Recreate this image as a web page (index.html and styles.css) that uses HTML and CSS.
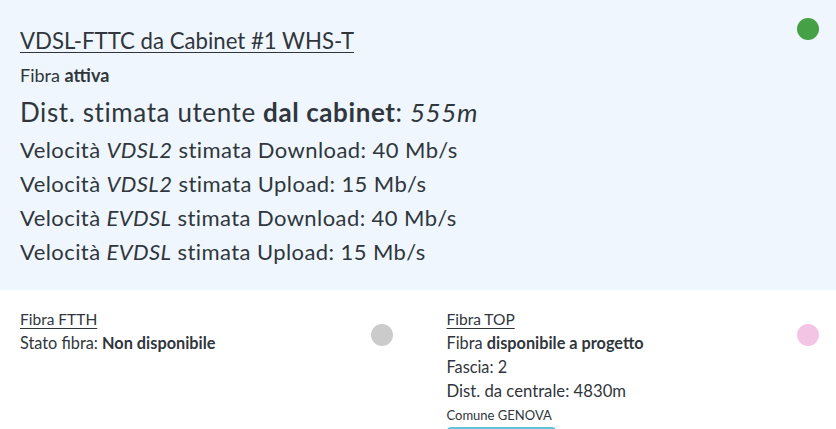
FILE: index.html
```html
<!DOCTYPE html>
<html lang="it">
<head>
<meta charset="utf-8">
<link rel="stylesheet" href="styles.css">
</head>
<body>
<section class="cabinet">
  <div class="cab-text">
    <div class="title"><u>VDSL-FTTC da Cabinet #1 WHS-T</u></div>
    <div class="line-m">Fibra <b>attiva</b></div>
    <div class="line-l">Dist. stimata utente <b>dal cabinet</b>: <i>555m</i></div>
    <div class="line-s">Velocità <i>VDSL2</i> stimata Download: 40 Mb/s</div>
    <div class="line-s">Velocità <i>VDSL2</i> stimata Upload: 15 Mb/s</div>
    <div class="line-s">Velocità <i>EVDSL</i> stimata Download: 40 Mb/s</div>
    <div class="line-s">Velocità <i>EVDSL</i> stimata Upload: 15 Mb/s</div>
  </div>
  <span class="dot dot-green"></span>
</section>
<section class="lower">
  <div class="col">
    <div class="col-text">
      <div class="sub-title"><u>Fibra FTTH</u></div>
      <div class="row">Stato fibra: <b>Non disponibile</b></div>
    </div>
    <span class="dot dot-grey"></span>
  </div>
  <div class="col">
    <div class="col-text">
      <div class="sub-title"><u>Fibra TOP</u></div>
      <div class="row">Fibra <b>disponibile a progetto</b></div>
      <div class="row">Fascia: 2</div>
      <div class="row wide">Dist. da centrale: 4830m</div>
      <div class="small">Comune GENOVA</div>
      <div class="btn"></div>
    </div>
    <span class="dot dot-pink"></span>
  </div>
</section>
</body>
</html>
```
FILE: styles.css
```css
html, body {
  margin: 0;
  padding: 0;
  background: #ffffff;
}
body {
  font-family: Lato, "Open Sans", sans-serif;
  color: #30363c;
  width: 836px;
  height: 429px;
  overflow: hidden;
}
b { font-weight: 700; }
u { text-decoration-thickness: 1px; text-underline-offset: 3px; }
.cabinet {
  background: #eff6fd;
  height: 290px;
  box-sizing: border-box;
  padding: 22px 17px 0 20px;
  display: flex;
  justify-content: space-between;
  align-items: flex-start;
}
.title { font-size: 22.2px; line-height: 37px; }
.line-m { font-size: 18px; line-height: 33px; }
.line-l { font-size: 26px; line-height: 41px; letter-spacing: 0.6px; }
.line-s { font-size: 22px; line-height: 34px; letter-spacing: 0.42px; }
.dot {
  display: block;
  width: 22px;
  height: 22px;
  border-radius: 50%;
  flex: none;
}
.dot-green { background: #46a046; margin-top: -4px; }
.dot-grey { background: #cbcbcb; margin-top: 34px; }
.dot-pink { background: #f4c4e5; margin-top: 34px; }
.lower {
  display: grid;
  grid-template-columns: 1fr 1fr;
  column-gap: 54px;
  padding: 0 17px 0 20px;
}
.col {
  display: flex;
  justify-content: space-between;
  align-items: flex-start;
}
.col-text { padding-top: 17px; }
.sub-title { font-size: 15.5px; line-height: 24px; }
.row { font-size: 16.3px; line-height: 24px; }
.row.wide { font-size: 16.7px; }
.small { font-size: 13px; line-height: 24px; }
.btn {
  margin-top: 0;
  width: 109px;
  height: 30px;
  background: #62c2d9;
  border-radius: 4px;
}
```
